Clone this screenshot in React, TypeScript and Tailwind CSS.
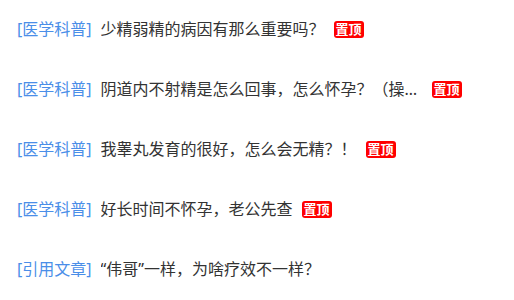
import React from 'react';

interface Item {
  tag: string;
  title: string;
  top?: boolean;
}

const items: Item[] = [
  { tag: '[医学科普]', title: '少精弱精的病因有那么重要吗？', top: true },
  { tag: '[医学科普]', title: '阴道内不射精是怎么回事，怎么怀孕？（操作指南）', top: true },
  { tag: '[医学科普]', title: '我睾丸发育的很好，怎么会无精？！', top: true },
  { tag: '[医学科普]', title: '好长时间不怀孕，老公先查', top: true },
  { tag: '[引用文章]', title: '“伟哥”一样，为啥疗效不一样？' },
];

const App: React.FC = () => {
  return (
    <div
      className="w-[514px] h-[300px] bg-white overflow-hidden"
      style={{ fontFamily: '"Noto Sans", "Noto Sans CJK SC", sans-serif' }}
    >
      <ul className="-mt-px">
        {items.map((item) => (
          <li key={item.title} className="h-[60px] flex items-center pl-[17px] text-[16px]">
            <span className="text-[#4a8ee8] whitespace-nowrap">{item.tag}</span>
            <span className="ml-[9px] text-[#333333] whitespace-nowrap overflow-hidden text-ellipsis max-w-[322px]">
              {item.title}
            </span>
            {item.top && (
              <span className="ml-[9px] shrink-0 inline-flex items-center justify-center h-[17px] w-[30px] rounded-[3px] bg-[#ff0000] text-white text-[13px] font-bold leading-none">
                置顶
              </span>
            )}
          </li>
        ))}
      </ul>
    </div>
  );
};

export default App;
